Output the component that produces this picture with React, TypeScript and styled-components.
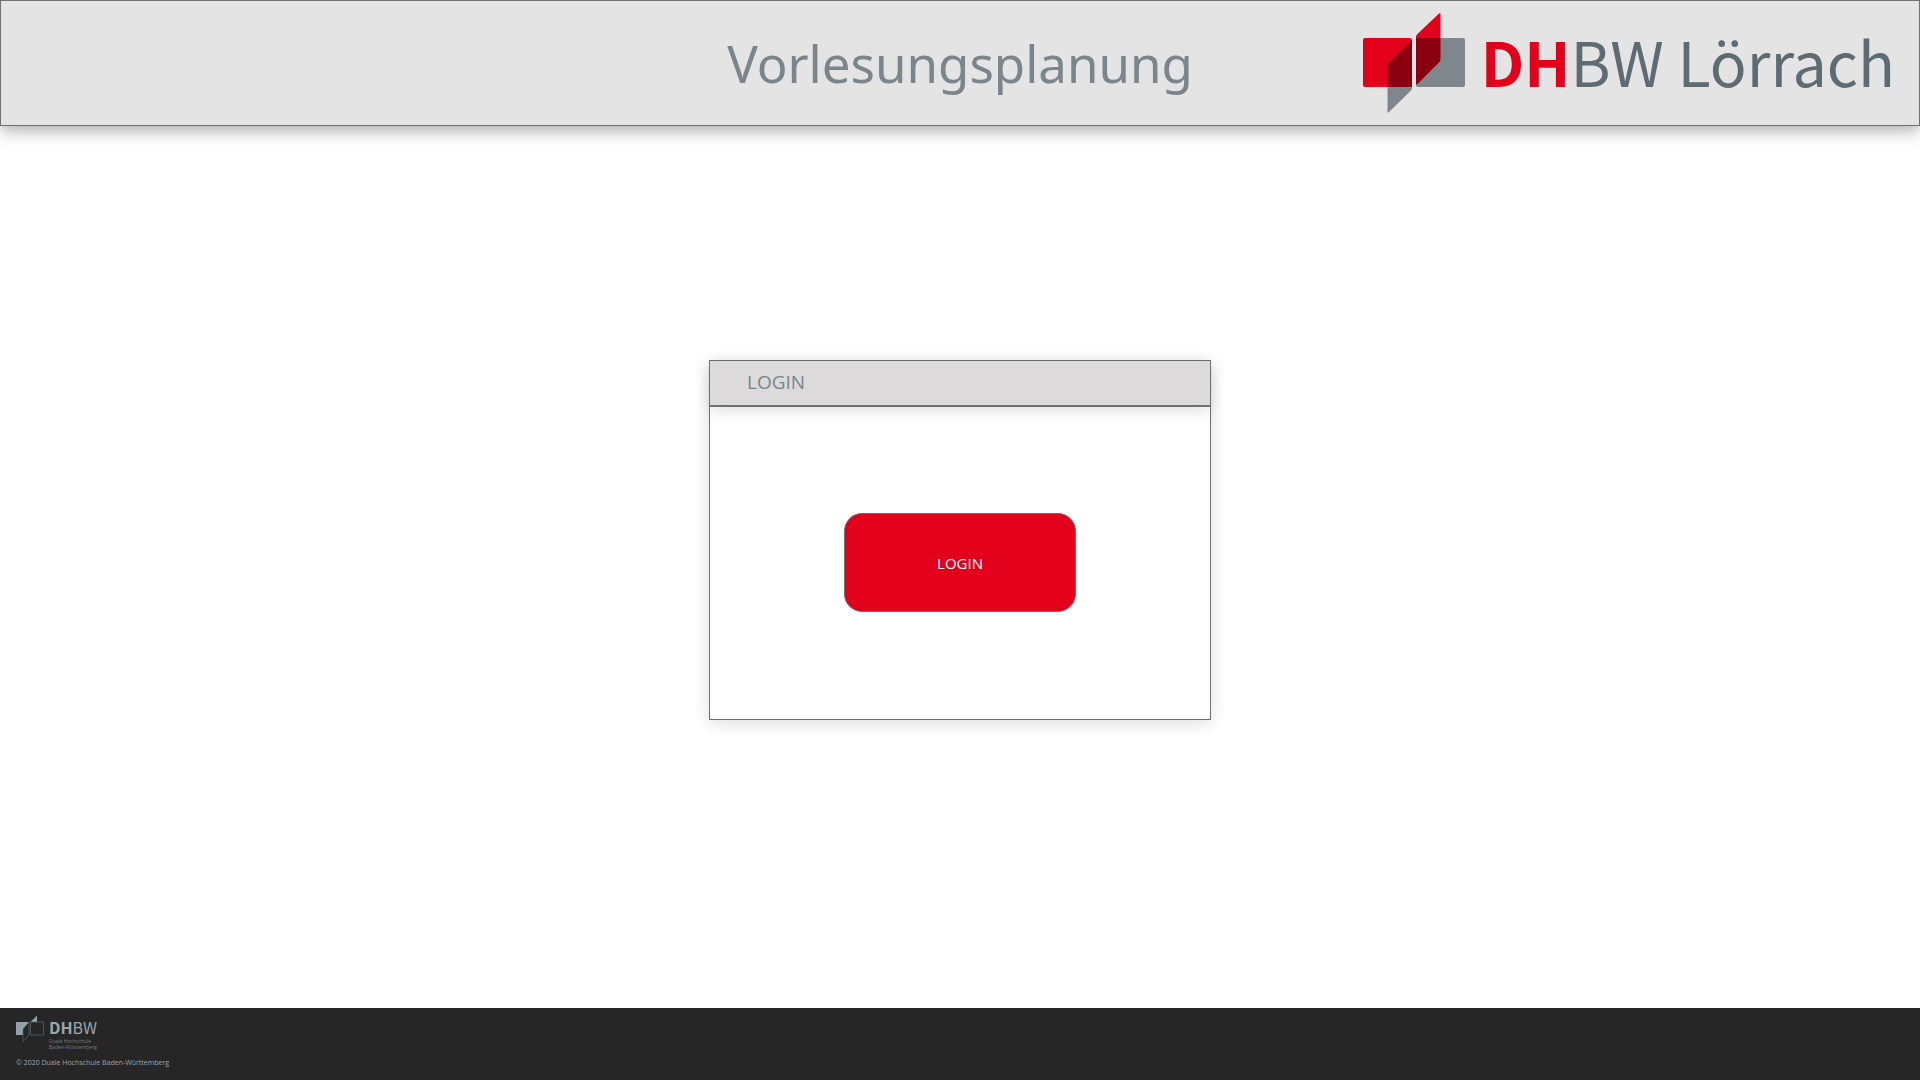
import React from "react";
import styled, { createGlobalStyle } from "styled-components";

const slate = "#7a858c";
const line = "#707070";
const sans = `"Open Sans", "Noto Sans", sans-serif`;
const brandSans = `"Noto Sans CJK SC", "Noto Sans", sans-serif`;

const GlobalStyle = createGlobalStyle`
  *, *::before, *::after { box-sizing: border-box; }
  body { margin: 0; background: #fff; font-family: ${sans}; color: ${slate}; }
`;

const Page = styled.div`
  display: flex;
  flex-direction: column;
  min-height: 100vh;
`;

const Header = styled.header`
  display: grid;
  grid-template-columns: 1fr auto 1fr;
  align-items: center;
  height: 126px;
  padding: 0 24px;
  background: #e4e4e4;
  border: 1px solid ${line};
  box-shadow: 0 4px 16px rgba(0, 0, 0, 0.35);
`;

const Title = styled.h1`
  grid-column: 2;
  margin: 0;
  font-family: "Noto Sans", sans-serif;
  font-size: 51px;
  line-height: 72px;
  font-weight: 400;
`;

const Brand = styled.div`
  display: flex;
  justify-self: end;
  align-items: center;
  gap: 16px;
`;

const BrandMark = styled.svg`
  display: block;
  flex: none;
`;

const BrandName = styled.span`
  padding-bottom: 4px;
  font-family: ${brandSans};
  font-size: 61px;
  line-height: 92px;
  color: #5d6b73;
  white-space: nowrap;
`;

const BrandStrong = styled.strong`
  font-weight: 700;
  color: #e2001a;
`;

const Main = styled.main`
  display: flex;
  flex: 1;
  align-items: center;
  justify-content: center;
  padding: 24px 24px 78px;
`;

const Card = styled.section`
  display: flex;
  flex-direction: column;
  width: 502px;
  border: 1px solid ${line};
  background: #fff;
  box-shadow: 0 4px 16px rgba(0, 0, 0, 0.13);
`;

const CardTitle = styled.h2`
  margin: 0;
  padding: 7px 37px 9px;
  border-bottom: 2px solid ${line};
  background: #dcdadb;
  box-shadow: 0 4px 16px rgba(0, 0, 0, 0.13);
  font-size: 19px;
  line-height: 28px;
  font-weight: 400;
`;

const CardBody = styled.div`
  display: flex;
  justify-content: center;
  padding: 106px 24px 107px;
`;

const LoginButton = styled.button`
  width: 232px;
  height: 99px;
  border: 1px solid ${line};
  border-radius: 18px;
  background: #e2001a;
  color: #fff;
  font-family: inherit;
  font-size: 15px;
  cursor: pointer;
`;

const Footer = styled.footer`
  display: flex;
  flex-direction: column;
  gap: 8px;
  height: 72px;
  padding: 7px 16px;
  background: #262626;
  color: #9aa5ac;
`;

const FooterBrand = styled.div`
  display: flex;
  align-items: flex-start;
  gap: 5px;
`;

const FooterName = styled.div`
  display: flex;
  flex-direction: column;
  padding-top: 1px;
`;

const FooterTitle = styled.span`
  font-family: ${brandSans};
  font-size: 16px;
  line-height: 22px;
`;

const FooterSub = styled.small`
  font-size: 5px;
  line-height: 6px;
  color: #737d83;
`;

const Copyright = styled.p`
  margin: 0;
  font-size: 7px;
  line-height: 10px;
`;

function Mark() {
  return (
    <BrandMark width="102" height="100" viewBox="0 0 102 100" aria-hidden="true">
      <rect x="0" y="25" width="49" height="49" rx="2" fill="#e2001a" />
      <rect x="53" y="25" width="49" height="49" rx="2" fill="#7d878c" />
      <path d="M24.500 74H49V75Q49 77 47 78.500L26 99Q25 100 24.500 99Z" fill="#7d878c" />
      <path d="M77.500 25H53V24Q53 22 54.500 21L76 0.600Q77.500 -0.500 77.500 1Z" fill="#e2001a" />
      <path d="M49 28V74H24.500V53Q24.500 51.500 26 50L48 28.500Z" fill="#8b0010" />
      <path d="M53 25H77.500V46.500Q77.500 48 76 49.500L54.500 71Q53 72 53 70.500Z" fill="#8b0010" />
    </BrandMark>
  );
}

function FooterMark() {
  return (
    <BrandMark width="28" height="27" viewBox="0 0 28 27" aria-hidden="true">
      <path d="M0 7H13L7 14V20H0Z" fill="#93a1aa" />
      <path d="M14.500 7L21 0.500V7Z" fill="#93a1aa" />
      <path d="M14.500 7H27.500V20H14.500ZM13 7V20L7 26.500V14" fill="none" stroke="#5f686e" strokeWidth="0.700" />
    </BrandMark>
  );
}

export default function App() {
  return (
    <Page>
      <GlobalStyle />
      <Header>
        <Title>Vorlesungsplanung</Title>
        <Brand>
          <Mark />
          <BrandName>
            <BrandStrong>DH</BrandStrong>BW Lörrach
          </BrandName>
        </Brand>
      </Header>
      <Main>
        <Card>
          <CardTitle>LOGIN</CardTitle>
          <CardBody>
            <LoginButton type="button">LOGIN</LoginButton>
          </CardBody>
        </Card>
      </Main>
      <Footer>
        <FooterBrand>
          <FooterMark />
          <FooterName>
            <FooterTitle>
              <strong>DH</strong>BW
            </FooterTitle>
            <FooterSub>Duale Hochschule</FooterSub>
            <FooterSub>Baden-Württemberg</FooterSub>
          </FooterName>
        </FooterBrand>
        <Copyright>© 2020 Duale Hochschule Baden-Württemberg</Copyright>
      </Footer>
    </Page>
  );
}
